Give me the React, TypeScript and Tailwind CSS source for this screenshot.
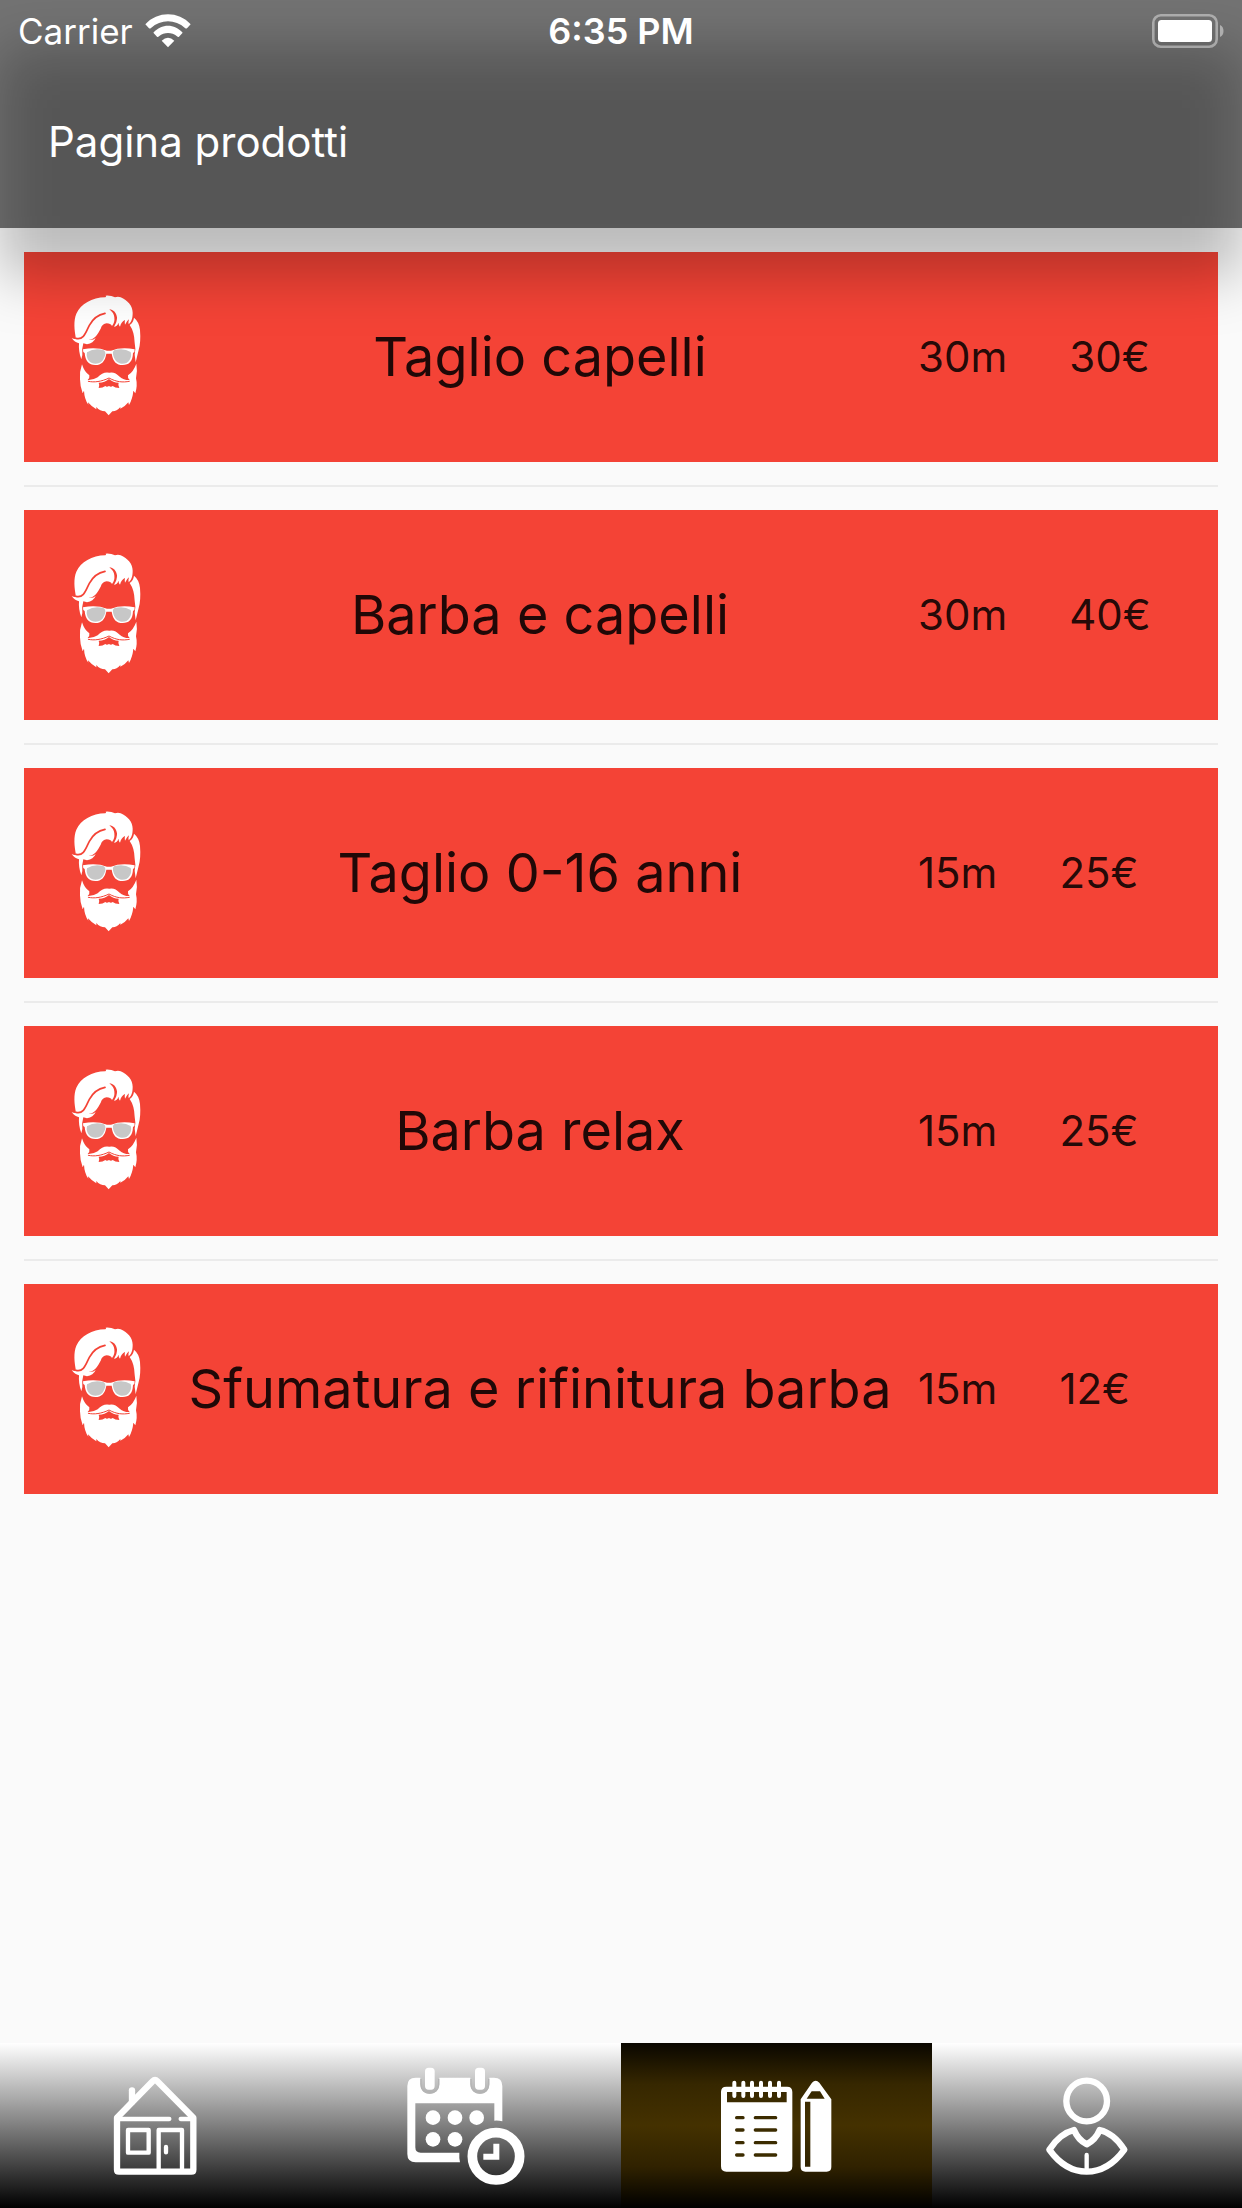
import React from 'react';

interface Product {
  name: string;
  duration: string;
  price: string;
}

const PRODUCTS: Product[] = [
  { name: 'Taglio capelli', duration: '30m', price: '30€' },
  { name: 'Barba e capelli', duration: '30m', price: '40€' },
  { name: 'Taglio 0-16 anni', duration: '15m', price: '25€' },
  { name: 'Barba relax', duration: '15m', price: '25€' },
  { name: 'Sfumatura e rifinitura barba', duration: '15m', price: '12€' },
];

const WifiIcon: React.FC = () => (
  <svg viewBox="447 38 138 102" className="w-[46px] h-[34px]" fill="#fff" aria-hidden="true">
    <path d="M448 69C485 29 547 29 584 69L573 81Q570 83 567 80C538 53 494 53 465 80Q462 83 459 81Z" />
    <path d="M472 94C497 66 535 66 560 94L549 106Q546 108 543 105C527 92 505 92 489 105Q486 108 483 106Z" />
    <path d="M497 118Q516 100 535 118L516 138Z" />
  </svg>
);

const BatteryIcon: React.FC = () => (
  <svg viewBox="0 0 72 34" className="w-[72px] h-[34px]" aria-hidden="true">
    <rect x="1.3" y="1.3" width="63.4" height="31.4" rx="7.5" fill="none" stroke="#fff" strokeOpacity="0.42" strokeWidth="2.6" />
    <rect x="6" y="6" width="54" height="22" rx="3.5" fill="#fff" />
    <path d="M68 11Q71.500 12.500 71.500 17T68 23Z" fill="#fff" fillOpacity="0.45" />
  </svg>
);

const BarberIcon: React.FC = () => (
  <svg viewBox="-5 81 360 360" className="w-[120px] h-[120px] shrink-0 overflow-visible" aria-hidden="true">
    <g fill="#fff">
      {/* hair */}
      <path d="M66 204Q74 208 79 206C74 180 71 153 80 131C93 103 127 82 167 82Q171 80 168 77Q184 76 196 82Q205 79 213 82C234 91 249 108 249 128C249 145 246 154 237 163Q235 157 238 148Q231 153 226 164Q224 157 226 150Q215 155 211 170Q206 165 207 158Q202 170 193 170Q203 155 202 142C200 128 191 119 179 118Q193 129 194 142Q196 158 187 168Q183 160 171 160Q158 161 153 176C144 193 136 207 117 210Q132 211 138 204Q131 220 112 223L101 220Q96 236 98 255L95 268Q86 245 88 220Q75 217 66 204Z" />
      <path d="M240 165Q251 158 253 143Q269 156 271 180Q274 216 267 240L258 277L255 254Q259 235 255 218Q254 185 240 165Z" />
      {/* beard and moustache */}
      <path d="M97 283Q104 306 119 316Q121 324 114 330Q130 331 144 322Q160 304 179 308Q195 304 210 320Q223 331 240 330Q233 324 235 316Q252 304 260 281Q264 303 259 325Q264 346 257 370L251 362Q249 386 238 405L236 397Q227 409 212 416L212 411Q200 425 188 424L177 436L166 424Q151 424 140 411L140 418Q124 408 115 397L116 404Q104 387 103 362L99 370Q91 348 91 328Q89 305 97 283Z" />
    </g>
    <g fill="none" stroke="#f44336" strokeLinecap="round">
      <path d="M79 205C103 211 109 185 119 166Q135 136 166 130" strokeWidth="5" />
      <path d="M116 334C134 338 155 335 178 324C200 336 219 338 239 334" strokeWidth="3" />
    </g>
    <path d="M147 338Q166 338 178 327Q190 338 207 338Q204 346 209 354Q196 354 189 348Q184 353 178 348Q171 353 167 348Q160 354 147 354Q151 346 147 338Z" fill="#f44336" />
    {/* glasses */}
    <path d="M100 238Q140 230 172 242H184Q215 230 255 238Q256 247 250 249C249 274 239 285 219 285C200 285 190 275 186 251H170C166 275 155 285 137 285C117 285 107 273 105 249Q99 246 100 238Z" fill="#fff" />
    <path d="M112 247Q135 232 163 241Q171 249 164 262C159 276 150 281 138 281C121 281 113 271 111 256ZM193 241Q221 232 243 246Q247 259 240 269C234 278 228 281 217 281C202 281 193 269 190 253Q188 245 193 241Z" fill="#c7c7c7" />
  </svg>
);

const HomeIcon: React.FC = () => (
  <svg viewBox="286 106 360 360" className="w-[120px] h-[120px]" fill="none" stroke="#fff" strokeLinejoin="round" strokeLinecap="round" aria-hidden="true">
    <path d="M352 261L459 152Q466 145 473 152L581 261V417Q581 423 575 423H358Q352 423 352 417Z" strokeWidth="19" />
    <path d="M397 213V179" strokeWidth="19" />
    <path d="M360 265H509M543 265H574" strokeWidth="13" />
    <path d="M385 298H447V366H385ZM477 420V298H547V420M499 349V365" strokeWidth="13" />
  </svg>
);

const CalendarIcon: React.FC = () => (
  <svg viewBox="77 106 360 360" className="w-[120px] h-[120px]" fill="#fff" aria-hidden="true">
    <path
      fillRule="evenodd"
      d="M106 141H120V161C120 179 132 189 148 189S177 179 177 161V141H270V161C270 179 283 189 299 189S327 179 327 161V141H341Q366 141 366 166V272Q354 269 342 270V218H105V350Q105 366 121 366H237Q236 382 239 395H106Q81 395 81 370V166Q81 141 106 141Z"
    />
    {/* gray sockets that keep the rings readable on the light end of the bar */}
    <path d="M122 145V161C122 177 133 187 148 187S175 177 175 161V145" fill="none" stroke="#b4b4b4" strokeWidth="4" />
    <path d="M272 145V161C272 177 284 187 299 187S325 177 325 161V145" fill="none" stroke="#b4b4b4" strokeWidth="4" />
    <rect x="134" y="111" width="29" height="66" rx="11" />
    <rect x="284" y="111" width="30" height="66" rx="11" />
    <circle cx="158" cy="261" r="22" />
    <circle cx="224" cy="261" r="22" />
    <circle cx="289" cy="261" r="22" />
    <circle cx="158" cy="326" r="22" />
    <circle cx="224" cy="326" r="22" />
    <circle cx="347" cy="377" r="71" fill="none" stroke="#fff" strokeWidth="29" />
    <path d="M339 339H357V387H309V369H339Z" />
  </svg>
);

const NotebookIcon: React.FC = () => (
  <svg viewBox="349 106 360 360" className="w-[120px] h-[120px]" fill="#fff" aria-hidden="true">
    <path fillRule="evenodd" d="M380 168H562Q578 168 578 184V407Q578 423 562 423H380Q364 423 364 407V184Q364 168 380 168ZM382 184V215H561V184Z" />
    <path d="M404 156V196M431 156V196M457 156V196M484 156V196M511 156V196M538 156V196" stroke="#fff" strokeWidth="12" strokeLinecap="round" />
    <path d="M411 261H430M467 261H528M411 298H430M467 298H528M411 336H430M467 336H528M411 373H430M467 373H528" stroke="#3c2c00" strokeWidth="10" strokeLinecap="round" />
    <path
      fillRule="evenodd"
      d="M603 206L637 156Q648 144 659 156L695 206V409Q695 423 681 423H617Q603 423 603 409ZM636 182L621 204H675L661 182ZM616 213V408H632V213Z"
    />
  </svg>
);

const ProfileIcon: React.FC = () => (
  <svg viewBox="80 106 360 360" className="w-[120px] h-[120px]" fill="none" stroke="#fff" strokeWidth="19" strokeLinejoin="round" strokeLinecap="round" aria-hidden="true">
    <circle cx="259" cy="211" r="61" />
    <path d="M221 298Q179 308 147 357Q194 423 259 423T372 357Q341 308 298 298Q286 327 259 341Q233 327 221 298Z" />
    <path d="M259 373V418" strokeWidth="13" />
  </svg>
);

const TABS = [
  { label: 'Home', Icon: HomeIcon },
  { label: 'Prenotazioni', Icon: CalendarIcon },
  { label: 'Prodotti', Icon: NotebookIcon },
  { label: 'Profilo', Icon: ProfileIcon },
];

const Header: React.FC = () => (
  <header className="relative z-10 text-white">
    {/* soft shadow, also visible through the translucent bar */}
    <div className="absolute inset-0 top-12 -bottom-12 bg-black/25 blur-[28px] pointer-events-none" />
    <div className="relative h-[228px] bg-black/54">
      <div className="grid grid-cols-3 items-center h-[62px] px-[18px] text-[36px] leading-[60px]">
        <div className="flex items-center gap-3">
          <span className="text-[35px]">Carrier</span>
          <WifiIcon />
        </div>
        <span className="text-center font-semibold">6:35 PM</span>
        <div className="flex justify-end">
          <BatteryIcon />
        </div>
      </div>
      <h1 className="px-12 pt-[52px] text-[42px] leading-[56px]">Pagina prodotti</h1>
    </div>
  </header>
);

const ProductRow: React.FC<{ product: Product }> = ({ product }) => (
  <li className="flex items-center h-[210px] pl-6 bg-[#f44336] text-black/87">
    <BarberIcon />
    <span className="flex-1 text-center text-[54px] leading-[64px] whitespace-nowrap">{product.name}</span>
    <div className="flex gap-[62px] w-[306px] pl-1.5 text-[42px] leading-[56px]">
      <span>{product.duration}</span>
      <span>{product.price}</span>
    </div>
  </li>
);

const App: React.FC = () => {
  const [active, setActive] = React.useState(2);

  return (
    <div className="flex flex-col min-h-screen overflow-hidden bg-[#fafafa] font-['Inter',sans-serif]">
      <Header />
      <main className="flex-1 p-6">
        <ul className="flex flex-col">
          {PRODUCTS.map((product, i) => (
            <React.Fragment key={product.name}>
              {i > 0 && <li role="separator" className="h-[2px] my-[23px] bg-[#ebebeb]" />}
              <ProductRow product={product} />
            </React.Fragment>
          ))}
        </ul>
      </main>
      <nav className="grid grid-cols-4 h-[165px] bg-linear-to-b/srgb from-white to-black">
        {TABS.map(({ label, Icon }, i) => (
          <button
            key={label}
            type="button"
            aria-label={label}
            onClick={() => setActive(i)}
            className={
              i === active
                ? 'flex items-center justify-center bg-[linear-gradient(#0a0700,#362700_25%,#443100_50%,#302200_75%,#000)]'
                : 'flex items-center justify-center'
            }
          >
            <Icon />
          </button>
        ))}
      </nav>
    </div>
  );
};

export default App;
